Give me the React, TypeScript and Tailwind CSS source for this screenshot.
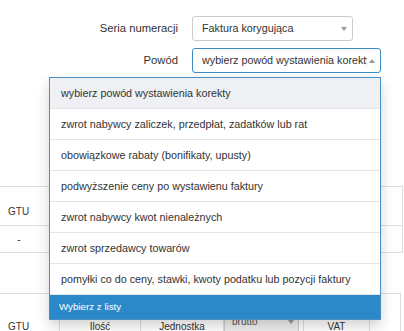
import React from "react";

function CaretDown() {
  return <span className="w-0 h-0 border-x-[3px] border-x-transparent border-t-[4px] border-t-[#999]" />;
}
function CaretUp() {
  return <span className="w-0 h-0 border-x-[3px] border-x-transparent border-b-[4px] border-b-[#999]" />;
}

export default function App() {
  const items = [
    "wybierz powód wystawienia korekty",
    "zwrot nabywcy zaliczek, przedpłat, zadatków lub rat",
    "obowiązkowe rabaty (bonifikaty, upusty)",
    "podwyższenie ceny po wystawienu faktury",
    "zwrot nabywcy kwot nienależnych",
    "zwrot sprzedawcy towarów",
    "pomyłki co do ceny, stawki, kwoty podatku lub pozycji faktury",
  ];
  return (
    <div className="relative w-[404px] h-[331px] overflow-hidden bg-white text-[#333] font-['Liberation_Sans',Arial,sans-serif]">
      <div className="pt-[16px] flex flex-col gap-[7px]">
        <div className="flex items-center h-[25px]">
          <div className="w-[178px] text-right text-[11.25px] leading-none">Seria numeracji</div>
          <div className="ml-[14px] w-[161px] h-full border border-[#ccc] rounded-[3px] flex items-center pl-[9px] pr-[5px] text-[10.75px]">
            <span className="flex-1 whitespace-nowrap">Faktura korygująca</span>
            <CaretDown />
          </div>
        </div>
        <div className="flex items-center h-[25px]">
          <div className="w-[178px] text-right text-[11.25px] leading-none">Powód</div>
          <div className="ml-[14px] w-[189px] h-full border border-[#3c8dc5] rounded-[3px] flex items-center pl-[9px] pr-[5px] text-[10.75px]">
            <span className="flex-1 whitespace-nowrap overflow-hidden flex items-center">
              <span>wybierz powód&nbsp;</span>
              <span className="inline-block w-px h-[14px] bg-[#222]" />
              <span>wystawienia korekty</span>
            </span>
            <span className="ml-[2px] flex"><CaretUp /></span>
          </div>
        </div>
      </div>

      <div className="mt-[113px] w-[403px] border-t border-r border-b border-[#ddd] text-[10px]">
        <div className="h-[39px] border-b border-[#ddd] flex items-end pb-[7px] pl-[8px] leading-[12px]">GTU</div>
        <div className="h-[26px] flex items-center">
          <span className="w-[38px] text-center">-</span>
        </div>
      </div>

      <div className="mt-[40px] w-[401px] border-t border-r border-[#ddd] flex h-[60px] text-[10px] leading-[12px]">
        <div className="w-[60px] border-r border-[#ddd] pt-[27px] pl-[8px]">GTU</div>
        <div className="w-[81px] border-r border-[#ddd] pt-[27px] text-center">Ilość</div>
        <div className="w-[83px] border-r border-[#ddd] pt-[27px] text-center">Jednostka</div>
        <div className="w-[80px] border-r border-[#ddd] pt-[17px]">
          <div className="w-[75px] h-[22px] bg-[#eee] border border-[#ccc] rounded-[2px] flex items-center pl-[7px] pr-[4px] text-[#555]">
            <span className="flex-1">brutto</span>
            <CaretDown />
          </div>
        </div>
        <div className="w-[66px] border-r border-[#ddd] pt-[27px] text-center">VAT</div>
        <div className="flex-1" />
      </div>

      <div className="absolute left-[49px] top-[77px] w-[332px] border border-[#4a90c6] bg-white shadow-[0_6px_12px_rgba(0,0,0,0.175)]">
        {items.map((t, i) => (
          <div
            key={i}
            className={`h-[31px] border-b border-[#e5e5e5] flex items-center pl-[11px] text-[10.75px] whitespace-nowrap ${i === 0 ? "bg-[#eef0f3]" : "bg-white"}`}
          >
            {t}
          </div>
        ))}
        <div className="h-[24px] bg-[#2b89c9] text-white text-[9.75px] pl-[9px] flex items-center">Wybierz z listy</div>
      </div>
    </div>
  );
}
